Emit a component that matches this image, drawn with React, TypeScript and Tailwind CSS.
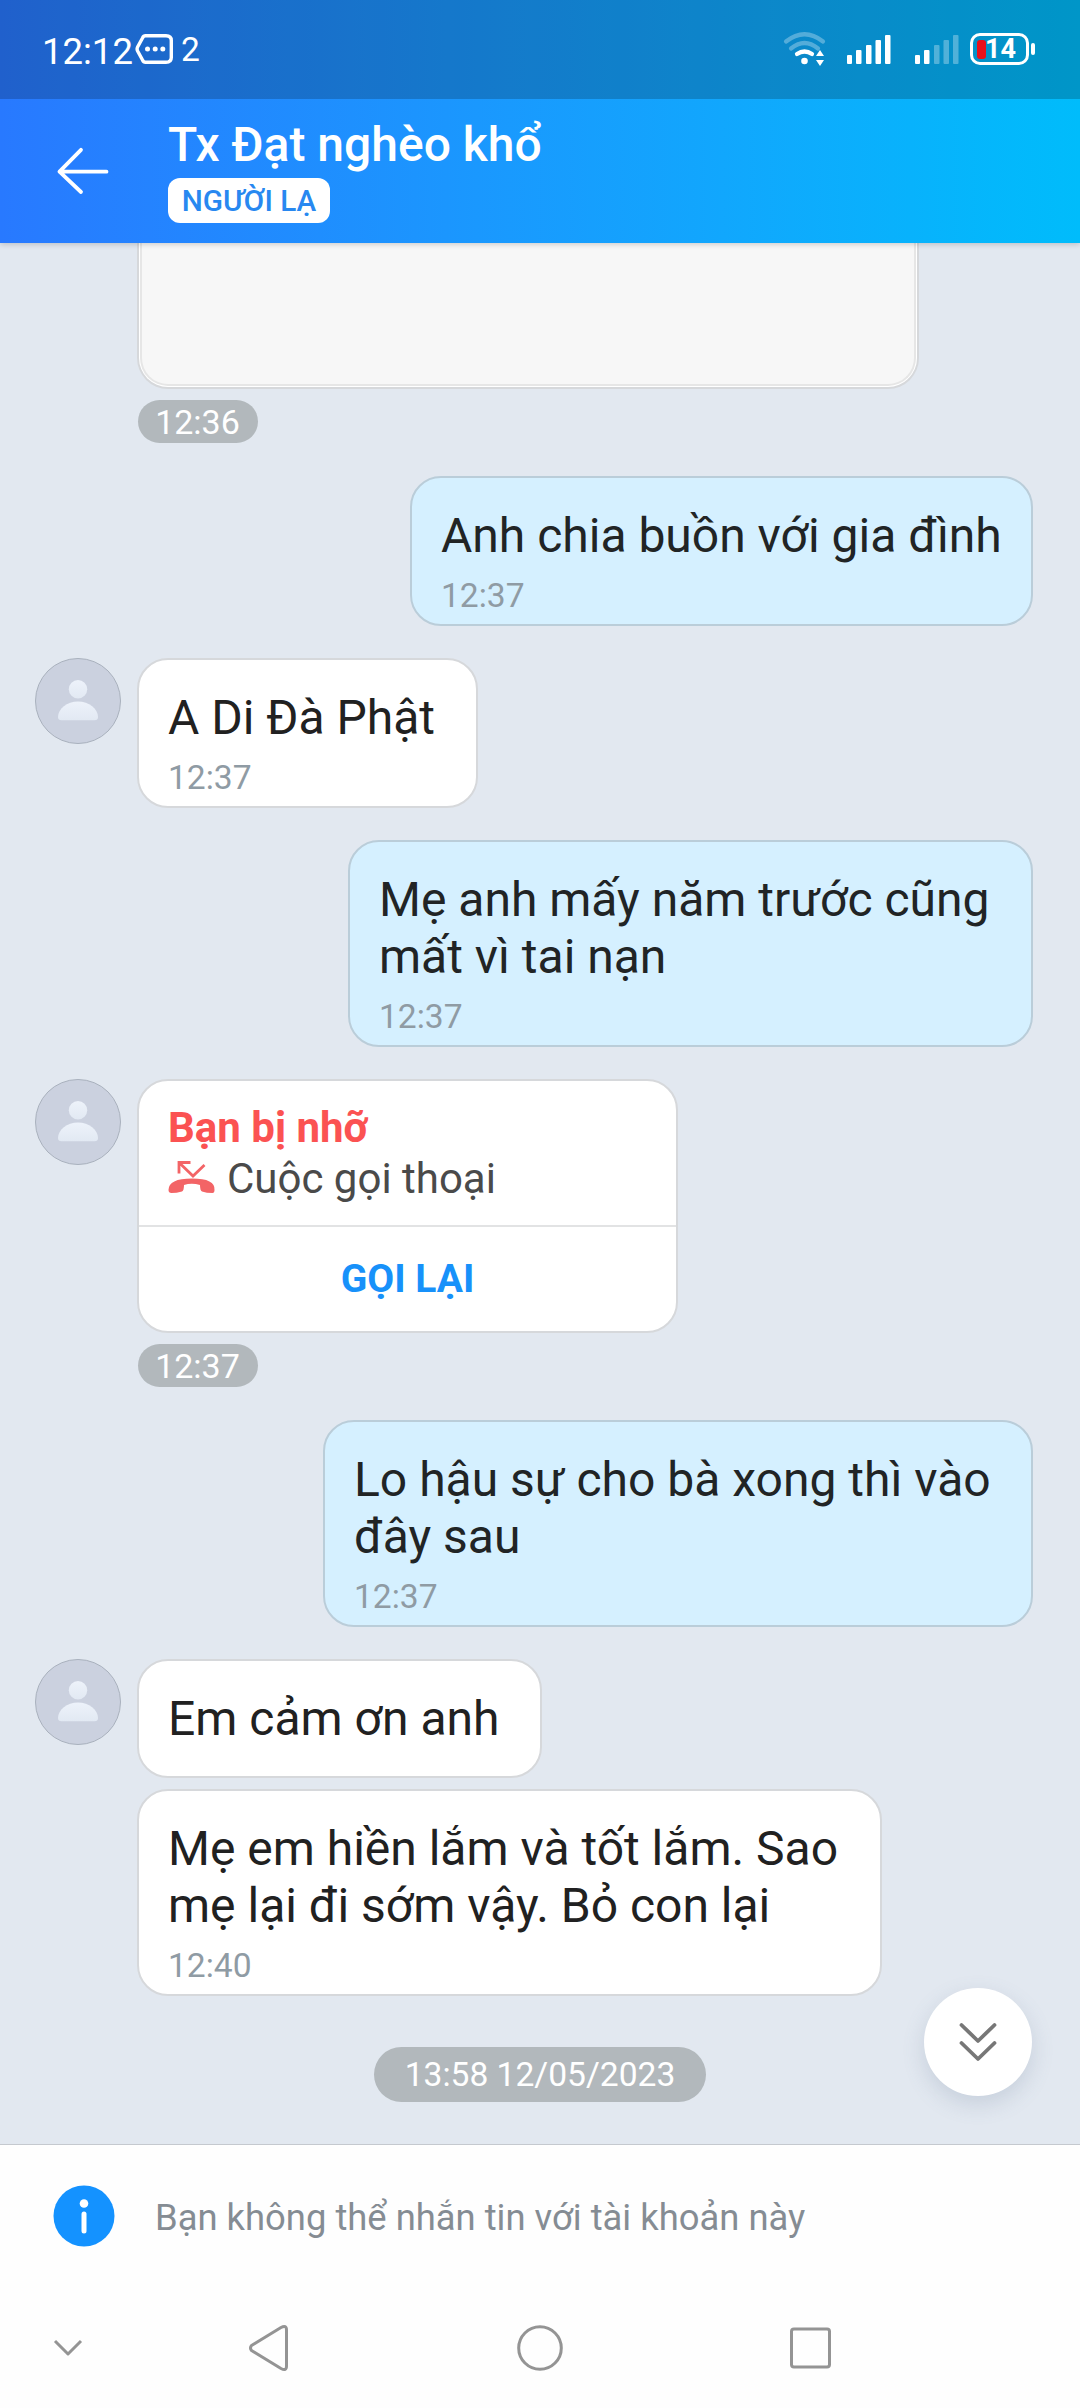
import React from "react";

function Avatar() {
  return (
    <div className="ml-[35px] mr-[16px] flex h-[86px] w-[86px] shrink-0 items-center justify-center rounded-full border border-[#a9b1bd] bg-[#cbd1df]">
      <svg width="84" height="84" viewBox="0 0 84 84">
        <defs>
          <linearGradient id="person" x1="0" y1="0" x2="0" y2="1">
            <stop offset="0" stopColor="#edf2fa" />
            <stop offset="1" stopColor="#e2e9f3" />
          </linearGradient>
        </defs>
        <circle cx="42" cy="30.3" r="9.2" fill="url(#person)" />
        <path d="M22 58C22 50 31 42.5 42 42.5S62 50 62 58Q62 61.3 58.500 61.300H25.500Q22 61.300 22 58Z" fill="url(#person)" />
      </svg>
    </div>
  );
}

function Time({ children }: { children: string }) {
  return <div className="mt-[12px] h-[39px] text-[33.6px] leading-[39px] text-[#8f9ba4]">{children}</div>;
}

type BubbleProps = { size: string; lines: string[]; time?: string; avatar?: boolean };

function Incoming({ size, avatar, lines, time }: BubbleProps) {
  return (
    <div className="flex">
      {avatar ? <Avatar /> : <div className="w-[137px] shrink-0" />}
      <div className={`rounded-[31px] border-2 border-[#d6d8db] bg-white pl-[29px] pt-[29px] ${size}`}>
        {lines.map((l) => (
          <div key={l} className="whitespace-nowrap text-[48px] leading-[57px] text-[#212121]">
            {l}
          </div>
        ))}
        {time && <Time>{time}</Time>}
      </div>
    </div>
  );
}

function Outgoing({ size, lines, time }: BubbleProps) {
  return (
    <div className="flex justify-end pr-[47px]">
      <div className={`rounded-[31px] border-2 border-[#bacdd9] bg-[#d5f0ff] pl-[29px] pt-[29px] ${size}`}>
        {lines.map((l) => (
          <div key={l} className="whitespace-nowrap text-[48px] leading-[57px] text-[#212425]">
            {l}
          </div>
        ))}
        {time && <Time>{time}</Time>}
      </div>
    </div>
  );
}

function TimePill({ children }: { children: string }) {
  return (
    <div className="ml-[138px] mt-[11px] flex h-[43px] w-[120px] items-center justify-center rounded-full bg-[#b2b8bc] pr-px pt-px text-[34px] leading-[42px] text-white">
      {children}
    </div>
  );
}

function StatusBar() {
  return (
    <div className="flex h-[99px] bg-black/20 text-white">
      <span className="ml-[42px] mt-[30px] w-[93px] whitespace-nowrap text-[36.5px] leading-[44px]">12:12</span>
      <svg className="mt-[32px]" width="40" height="34" viewBox="0 0 40 34" fill="none">
        <path d="M10.500 3.700H31Q36.300 3.700 36.300 8.500V25.500Q36.300 30.300 31 30.300H10.500Q8.500 30.300 7.500 28L2.600 19Q1.600 17 2.600 15L7.500 6Q8.500 3.700 10.500 3.700Z" stroke="white" strokeWidth="3.400" />
        <circle cx="12.500" cy="17" r="2.500" fill="white" />
        <circle cx="20.200" cy="17" r="2.500" fill="white" />
        <circle cx="27.800" cy="17" r="2.500" fill="white" />
      </svg>
      <span className="ml-[6px] mt-[28px] text-[33.500px] leading-[44px]">2</span>
      <svg className="ml-auto mr-[158px] mt-[29px]" width="142" height="40" viewBox="780 29 142 40" fill="none" overflow="visible">
        <g stroke="white" strokeWidth="4.200" strokeLinecap="round">
          <path d="M786 41.500Q804.500 27 823 41.500" opacity=".3" />
          <path d="M791 48.500Q804.500 37.500 818 48.500" opacity=".3" />
          <path d="M797 54Q804.500 49 812 54" />
        </g>
        <circle cx="804.500" cy="61" r="3.300" fill="white" />
        <path d="M820 50L824 56H816ZM820 66L824 60H816Z" fill="white" />
        <g fill="white">
          <rect x="847" y="55" width="5" height="9" rx="1" />
          <rect x="856" y="50" width="5.500" height="14" rx="1" />
          <rect x="866" y="45" width="5.500" height="19" rx="1" />
          <rect x="875.500" y="40" width="5.500" height="24" rx="1" />
          <rect x="885" y="35" width="5.500" height="29" rx="1" />
          <rect x="915" y="55" width="5" height="9" rx="1" />
          <rect x="924" y="50" width="5.500" height="14" rx="1" />
          <g opacity=".3">
            <rect x="934" y="45" width="5.500" height="19" rx="1" />
            <rect x="943.500" y="40" width="5.500" height="24" rx="1" />
            <rect x="953" y="35" width="5.500" height="29" rx="1" />
          </g>
        </g>
      </svg>
      <div className="-ml-[110px] mr-[45px] mt-[33px] flex h-[32px] items-center">
        <div className="flex h-[32px] w-[59px] items-center rounded-[10px] border-[3px] border-white pl-[4px]">
          <div className="h-[19px] w-[9px] shrink-0 rounded-[3px] bg-[#e8101c]" />
          <span className="-ml-px text-[27px] font-bold leading-[26px]">14</span>
        </div>
        <div className="ml-[2px] h-[12px] w-[4px] rounded-full bg-white" />
      </div>
    </div>
  );
}

function Header() {
  return (
    <div className="flex h-[144px]">
      <svg className="ml-[54px] mt-[45px]" width="60" height="54" viewBox="54 144 60 54" fill="none" stroke="white" strokeWidth="3.800" strokeLinecap="round" strokeLinejoin="round">
        <path d="M106.500 171.700H59.500M81 149.800L59.500 171.700L81 192" />
      </svg>
      <div className="ml-[54px] pt-[18px]">
        <div className="whitespace-nowrap text-[48px] font-medium leading-[56px] text-white">Tx Đạt nghèo khổ</div>
        <div className="mt-[5px] flex h-[45px] w-[162px] items-center justify-center rounded-[12px] bg-white pt-px text-[29.700px] font-medium leading-[44px] text-[#2888f0]">
          NGƯỜI LẠ
        </div>
      </div>
    </div>
  );
}

function MissedCall() {
  return (
    <div className="flex">
      <Avatar />
      <div className="h-[254px] w-[541px] rounded-[31px] border-2 border-[#d6d8db] bg-white">
        <div className="h-[144px] pl-[29px] pt-[22px]">
          <div className="text-[42px] font-bold leading-[50px] text-[#fb5252]">Bạn bị nhỡ</div>
          <div className="flex">
            <svg className="mt-[6px]" width="48" height="38" viewBox="-0.500 0 48 38" fill="none">
              <path d="M10.500 14.500V3.500H22M11 4L24.500 17L36 6" stroke="#f36466" strokeWidth="2.800" />
              <path d="M0 31Q0 19.500 23.500 19.500T46 31Q46 34 44 34Q38 34 33.500 32.500Q31.500 31.500 31.500 26Q23 23.500 15.500 26Q15.500 31.500 13.500 32.500Q8 34 3 34Q0 34 0 31Z" fill="#f36466" />
            </svg>
            <span className="ml-[11px] text-[42px] leading-[52px] text-[#4a4a4a]">Cuộc gọi thoại</span>
          </div>
        </div>
        <div className="flex h-[106px] items-center justify-center border-t-2 border-[#e2e3e4] text-[39px] font-bold text-[#1791fa]">GỌI LẠI</div>
      </div>
    </div>
  );
}

function BottomBar() {
  return (
    <div className="h-[265px] border-t border-[#c5c9cf] bg-[#fefefe]">
      <div className="flex items-center pt-[40px]">
        <svg className="ml-[53px]" width="62" height="62" viewBox="0 0 62 62">
          <circle cx="31" cy="31" r="30.500" fill="#1492ff" />
          <circle cx="31" cy="18.500" r="4.300" fill="white" />
          <rect x="28.500" y="26.500" width="5" height="22" rx="2.500" fill="white" />
        </svg>
        <span className="ml-[40px] whitespace-nowrap pt-[3px] text-[36.400px] leading-[44px] text-[#858c93]">Bạn không thể nhắn tin với tài khoản này</span>
      </div>
      <svg className="mt-[68px]" width="1080" height="80" viewBox="0 2315 1080 80" fill="none" stroke="#949494" strokeWidth="3" strokeLinejoin="round">
        <path d="M55 2341L68 2354L81 2341" />
        <path d="M251.500 2345.500Q249.500 2348 251.500 2350.500L281 2368.500Q286.500 2371.500 286.500 2366V2330Q286.500 2324.500 281 2327.500L251.500 2345.500Z" />
        <circle cx="540" cy="2348" r="21.300" />
        <rect x="791.500" y="2329" width="38" height="38" rx="2.500" />
      </svg>
    </div>
  );
}

export default function App() {
  return (
    <div className="relative flex h-[2408px] w-[1080px] flex-col overflow-hidden bg-[#e2e8f0] font-['Roboto',sans-serif]">
      <div className="relative z-10 shrink-0 bg-gradient-to-r from-[#2879ff] to-[#00bcfb] shadow-[0_1px_6px_rgba(0,0,0,0.2)]">
        <StatusBar />
        <Header />
      </div>
      <main className="h-[1901px] shrink-0">
        <div className="ml-[137px] h-[146px] w-[782px] rounded-b-[31px] border-2 border-t-0 border-[#d6d8db] bg-white px-px pb-px">
          <div className="h-full rounded-b-[28px] border-2 border-t-0 border-[#e6e6e6] bg-[#f7f7f7]" />
        </div>
        <TimePill>12:36</TimePill>
        <div className="mt-[33px] flex flex-col gap-[32px]">
          <Outgoing size="w-[623px] h-[150px]" lines={["Anh chia buồn với gia đình"]} time="12:37" />
          <Incoming avatar size="w-[341px] h-[150px]" lines={["A Di Đà Phật"]} time="12:37" />
          <Outgoing size="w-[685px] h-[207px]" lines={["Mẹ anh mấy năm trước cũng", "mất vì tai nạn"]} time="12:37" />
          <MissedCall />
        </div>
        <TimePill>12:37</TimePill>
        <div className="mt-[33px] flex flex-col gap-[32px]">
          <Outgoing size="w-[710px] h-[207px]" lines={["Lo hậu sự cho bà xong thì vào", "đây sau"]} time="12:37" />
          <Incoming avatar size="w-[405px] h-[119px]" lines={["Em cảm ơn anh"]} />
        </div>
        <div className="mt-[11px]">
          <Incoming size="w-[745px] h-[207px]" lines={["Mẹ em hiền lắm và tốt lắm. Sao", "mẹ lại đi sớm vậy. Bỏ con lại"]} time="12:40" />
        </div>
        <div className="mx-auto mt-[51px] flex h-[55px] w-[332px] items-center justify-center rounded-full bg-[#b2b8bc] pt-px text-[33.600px] leading-[54px] text-white">
          13:58 12/05/2023
        </div>
      </main>
      <BottomBar />
      <div className="absolute right-[48px] top-[1988px] flex h-[108px] w-[108px] items-center justify-center rounded-full bg-white shadow-[0_8px_22px_rgba(90,110,140,0.2)]">
        <svg width="40" height="42" viewBox="0 0 40 42" fill="none" stroke="#777" strokeWidth="3.800" strokeLinecap="round" strokeLinejoin="round">
          <path d="M3.500 4L20 20L36.500 4M3.500 22L20 38L36.500 22" />
        </svg>
      </div>
    </div>
  );
}
